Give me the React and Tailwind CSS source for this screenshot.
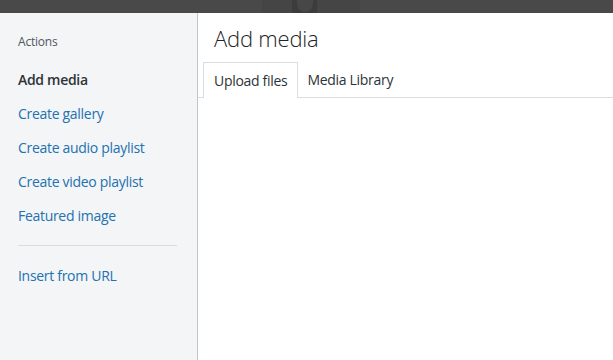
const links = ["Create gallery", "Create audio playlist", "Create video playlist", "Featured image"];

const App = () => {
  return (
    <div className="w-[613px] h-[360px] overflow-hidden flex flex-col bg-white" style={{ fontFamily: '"Open Sans", "Noto Sans", sans-serif' }}>
      <div className="h-[13px] shrink-0 bg-[#494949] flex">
        <div className="w-[262px]" />
        <div className="w-[98px] bg-[#454545] flex">
          <div className="w-[30px]" />
          <div className="w-[25px] bg-[#3c3c3c] flex justify-center">
            <div className="w-[16px] h-[12px] rounded-b-full bg-[#474747]" />
          </div>
        </div>
      </div>

      <div className="flex flex-1 min-h-0">
        <div className="w-[198px] shrink-0 bg-[#f3f5f6] border-r border-[#c3c4c7] pl-[18px] pt-[20px]">
          <p className="text-[12px] text-[#50575e] tracking-[-0.2px] leading-[18px]">Actions</p>
          <ul className="mt-[12px]">
            <li className="text-[14px] leading-[34px] font-semibold text-[#2c3338] tracking-[-0.3px]">Add media</li>
            {links.map((l) => (
              <li key={l} className="text-[14px] leading-[34px] text-[#2271b1] tracking-[-0.3px]">{l}</li>
            ))}
          </ul>
          <div className="w-[159px] h-px bg-[#dcdcde] mt-[12px] mb-[13px]" />
          <p className="text-[14px] leading-[34px] text-[#2271b1] tracking-[-0.3px]">Insert from URL</p>
        </div>

        <div className="flex-1 flex flex-col">
          <h1 className="pl-[16px] pt-[10px] text-[22px] font-light text-[#1d2327] leading-[30px] tracking-[-0.2px]">Add media</h1>
          <div className="flex items-end mt-[9px] pl-[5px] border-b border-[#dcdcde] h-[36px]">
            <div className="h-[36px] px-[10px] border border-b-0 border-[#dcdcde] bg-white -mb-px flex items-center text-[14px] text-[#2c3338] tracking-[-0.3px]">Upload files</div>
            <div className="h-[35px] pl-[9px] pr-[10px] flex items-center text-[14px] text-[#2c3338] tracking-[-0.3px]">Media Library</div>
          </div>
        </div>
      </div>
    </div>
  );
};

export default App;
